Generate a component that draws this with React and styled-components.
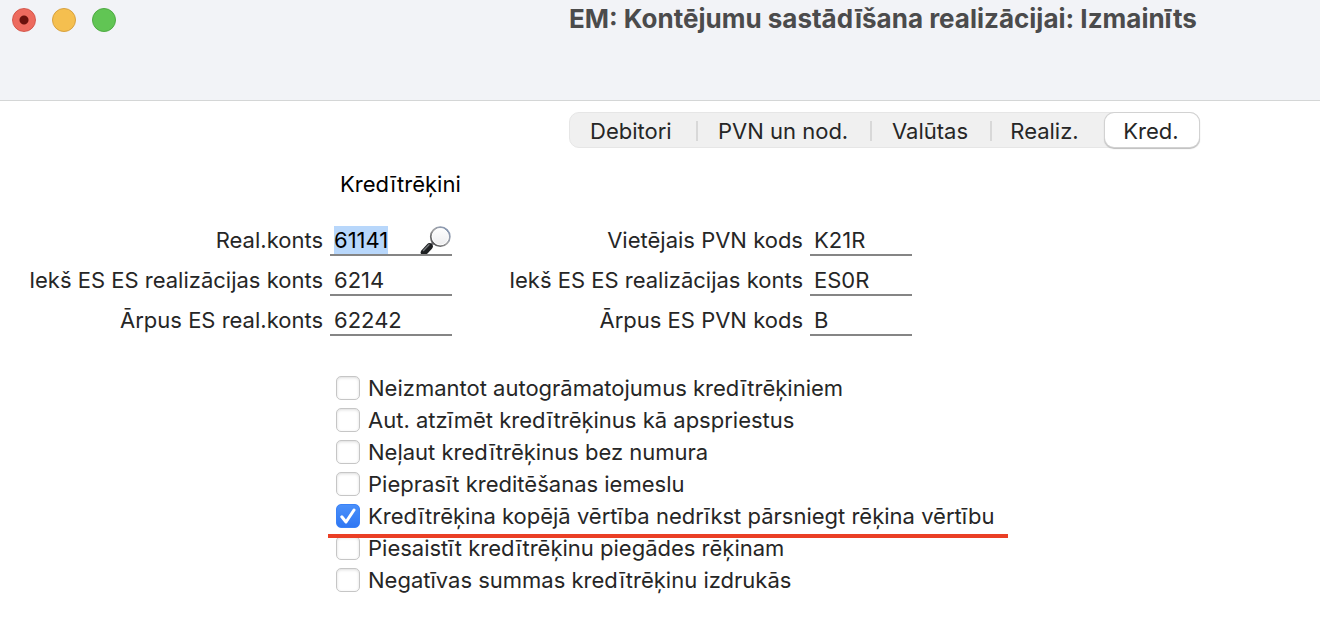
import React, { useEffect, useRef, useState } from "react";
import styled, { createGlobalStyle } from "styled-components";

const tabs = ["Debitori", "PVN un nod.", "Valūtas", "Realiz.", "Kred."];

const accountFields = [
    { id: "realKonts", label: "Real.konts", value: "61141", lookup: true },
    { id: "ieksKonts", label: "Iekš ES ES realizācijas konts", value: "6214" },
    { id: "arpusKonts", label: "Ārpus ES real.konts", value: "62242" },
];

const vatFields = [
    { id: "vietPvn", label: "Vietējais PVN kods", value: "K21R" },
    { id: "ieksPvn", label: "Iekš ES ES realizācijas konts", value: "ES0R" },
    { id: "arpusPvn", label: "Ārpus ES PVN kods", value: "B" },
];

const options = [
    { id: "autogram", label: "Neizmantot autogrāmatojumus kredītrēķiniem" },
    { id: "apspriest", label: "Aut. atzīmēt kredītrēķinus kā apspriestus" },
    { id: "numurs", label: "Neļaut kredītrēķinus bez numura" },
    { id: "iemesls", label: "Pieprasīt kreditēšanas iemeslu" },
    {
        id: "vertiba",
        label: "Kredītrēķina kopējā vērtība nedrīkst pārsniegt rēķina vērtību",
        checked: true,
        marked: true,
    },
    { id: "piegade", label: "Piesaistīt kredītrēķinu piegādes rēķinam" },
    { id: "negativas", label: "Negatīvas summas kredītrēķinu izdrukās" },
];

const Magnifier = () => (
    <svg width="32" height="28" viewBox="0 0 32 28" aria-hidden="true">
        <defs>
            <linearGradient id="rim" x1="0" y1="1" x2="1" y2="0">
                <stop offset="0" stopColor="#3c3c3e" />
                <stop offset="0.5" stopColor="#a4a4a6" />
                <stop offset="1" stopColor="#7f93b4" />
            </linearGradient>
            <linearGradient id="glass" x1="0" y1="0" x2="0" y2="1">
                <stop offset="0" stopColor="#ffffff" />
                <stop offset="1" stopColor="#ececee" />
            </linearGradient>
        </defs>
        <path d="M10 20 L14 16" stroke="#77777a" strokeWidth="3" />
        <path d="M4 26.5 L9.5 20.5" stroke="#1d1f21" strokeWidth="6.5" strokeLinecap="round" />
        <path d="M3.5 24.5 L9 18.8" stroke="#75797c" strokeWidth="1.4" strokeLinecap="round" />
        <circle cx="20.3" cy="10.7" r="9.4" fill="url(#glass)" stroke="url(#rim)" strokeWidth="2" />
        <circle cx="20.3" cy="10.7" r="8.2" fill="none" stroke="#ffffff" strokeWidth="1" />
    </svg>
);

const Field = ({ field, narrow }) => {
    const [value, setValue] = useState(field.value);
    const inputRef = useRef(null);

    useEffect(() => {
        // first field starts with its content selected
        if (field.lookup) {
            inputRef.current.focus();
            inputRef.current.select();
        }
    }, [field.lookup]);

    return (
        <FieldRow>
            <FieldLabel htmlFor={field.id}>{field.label}</FieldLabel>
            <InputLine $narrow={narrow}>
                <TextInput
                    id={field.id}
                    ref={inputRef}
                    type="text"
                    value={value}
                    onChange={(e) => setValue(e.target.value)}
                />
                {field.lookup && (
                    <LookupButton type="button" aria-label="Meklēt">
                        <Magnifier />
                    </LookupButton>
                )}
            </InputLine>
        </FieldRow>
    );
};

const App = () => {
    const [activeTab, setActiveTab] = useState("Kred.");

    return (
        <Window>
            <GlobalStyle />
            <TitleBar>
                <Lights>
                    <Light type="button" aria-label="Aizvērt" $fill="#ed6a5e" $edge="#d5564b" $dot />
                    <Light type="button" aria-label="Minimizēt" $fill="#f5bf4f" $edge="#d8a140" />
                    <Light type="button" aria-label="Palielināt" $fill="#61c554" $edge="#4fab43" />
                </Lights>
                <Title>EM: Kontējumu sastādīšana realizācijai: Izmainīts</Title>
            </TitleBar>
            <TabBar>
                <Tabs>
                    {tabs.map((tab) => (
                        <Tab
                            key={tab}
                            type="button"
                            $active={tab === activeTab}
                            onClick={() => setActiveTab(tab)}
                        >
                            {tab}
                        </Tab>
                    ))}
                </Tabs>
            </TabBar>
            <Form>
                <Heading>Kredītrēķini</Heading>
                <Columns>
                    <Column $width="452px">
                        {accountFields.map((field) => (
                            <Field key={field.id} field={field} />
                        ))}
                    </Column>
                    <Column $width="460px">
                        {vatFields.map((field) => (
                            <Field key={field.id} field={field} narrow />
                        ))}
                    </Column>
                </Columns>
                <Options>
                    {options.map((option) => (
                        <Option key={option.id} htmlFor={option.id} $marked={option.marked}>
                            <Checkbox type="checkbox" id={option.id} defaultChecked={option.checked} />
                            <CheckMark viewBox="0 0 24 24" aria-hidden="true">
                                <path d="M5.8 12.8 L10 18 L18 6" />
                            </CheckMark>
                            {option.label}
                        </Option>
                    ))}
                </Options>
            </Form>
        </Window>
    );
};

export default App;

const GlobalStyle = createGlobalStyle`
    * {
        box-sizing: border-box;
    }

    body {
        margin: 0;
        background: #fff;
        color: #262626;
        font-family: Inter, "Liberation Sans", sans-serif;
        font-size: 22px;
    }

    button, input {
        font: inherit;
        color: inherit;
    }
`;

const Window = styled.div`
    overflow-x: hidden;
`;

const TitleBar = styled.header`
    display: flex;
    align-items: flex-start;
    height: 101px;
    padding-left: 12px;
    background: #f2f3f7;
    border-bottom: 1px solid #d4d6d6;
`;

const Lights = styled.div`
    display: flex;
    gap: 16px;
    width: 557px;
    padding-top: 8px;
`;

const Light = styled.button`
    width: 24px;
    height: 24px;
    padding: 0;
    border: 1px solid ${(props) => props.$edge};
    border-radius: 50%;
    background: ${(props) =>
        props.$dot
            ? `radial-gradient(circle, #6b110c 0 4px, ${props.$fill} 5px)`
            : props.$fill};
`;

const Title = styled.h1`
    margin: 0;
    padding-top: 3px;
    font-size: 26px;
    font-weight: 700;
    line-height: 32px;
    color: #4b4b4c;
    white-space: nowrap;
`;

const TabBar = styled.nav`
    display: flex;
    padding: 11px 0 0 569px;
`;

const Tabs = styled.div`
    display: grid;
    grid-template-columns: 128px 174px 120px 113px 94px;
    height: 36px;
    border: 1px solid #e6e6e6;
    border-radius: 10px;
    background: #f0f0f0;
`;

const Tab = styled.button`
    display: flex;
    align-items: center;
    justify-content: center;
    padding: 2px 2px 0 0;
    border: 0;
    border-radius: 9px;
    background: ${(props) => (props.$active ? "#fff" : "none")};
    box-shadow: ${(props) =>
        props.$active ? "0 0 0 1px #d2d2d2, 0 1px 1px 1px #bdbdbd" : "none"};
    white-space: nowrap;

    &:not(:nth-last-child(-n + 2)) {
        padding: 2px 0 0 20px;
        justify-content: space-between;
    }

    &:not(:nth-last-child(-n + 2))::after {
        content: "";
        width: 2px;
        height: 20px;
        background: #d8d8d8;
    }

    &:nth-last-child(2) {
        padding-right: 8px;
    }
`;

const Form = styled.form`
    padding-top: 22px;
`;

const Heading = styled.h2`
    margin: 0 0 28px 340px;
    font-size: 22px;
    font-weight: 400;
    line-height: 28px;
    color: #000;
`;

const Columns = styled.div`
    display: flex;
`;

const Column = styled.div`
    display: flex;
    flex-direction: column;
    gap: 10px;
    width: ${(props) => props.$width};
`;

const FieldRow = styled.div`
    display: flex;
    justify-content: flex-end;
    gap: 7px;
`;

const FieldLabel = styled.label`
    line-height: 28px;
    white-space: nowrap;
`;

const InputLine = styled.div`
    display: flex;
    flex: none;
    width: ${(props) => (props.$narrow ? "102px" : "122px")};
    height: 30px;
    padding-left: 4px;
    border-bottom: 2px solid #858585;
`;

const TextInput = styled.input`
    flex: 1;
    min-width: 0;
    height: 28px;
    padding: 0;
    border: 0;
    outline: 0;
    background: none;
    line-height: 28px;

    &::selection {
        background: #b8d7fb;
        color: #000;
    }
`;

const LookupButton = styled.button`
    display: flex;
    padding: 0;
    border: 0;
    background: none;
`;

const Options = styled.div`
    display: flex;
    flex-direction: column;
    align-items: flex-start;
    padding: 36px 0 0 336px;
`;

const Option = styled.label`
    position: relative;
    display: grid;
    grid-template-columns: 24px auto;
    align-items: center;
    column-gap: 8px;
    height: 32px;
    line-height: 32px;
    white-space: nowrap;

    /* red underline laid over the rows */
    &::after {
        content: "";
        display: ${(props) => (props.$marked ? "block" : "none")};
        position: absolute;
        z-index: 1;
        top: 34px;
        left: -8px;
        width: 680px;
        height: 4px;
        background: #ea3f25;
    }
`;

const Checkbox = styled.input`
    grid-area: 1 / 1;
    appearance: none;
    width: 24px;
    height: 24px;
    margin: 0;
    border: 1px solid #c6c6c6;
    border-radius: 5px;
    background: #fff;
    box-shadow: inset 0 1px 3px #dcdcdc;

    &:checked {
        border-color: #3a82f7;
        background: linear-gradient(#4a90fa, #2f77f3);
        box-shadow: none;
    }
`;

const CheckMark = styled.svg`
    grid-area: 1 / 1;
    width: 24px;
    height: 24px;
    fill: none;
    stroke: #fff;
    stroke-width: 3;
    stroke-linecap: round;
    stroke-linejoin: round;
    pointer-events: none;
`;
